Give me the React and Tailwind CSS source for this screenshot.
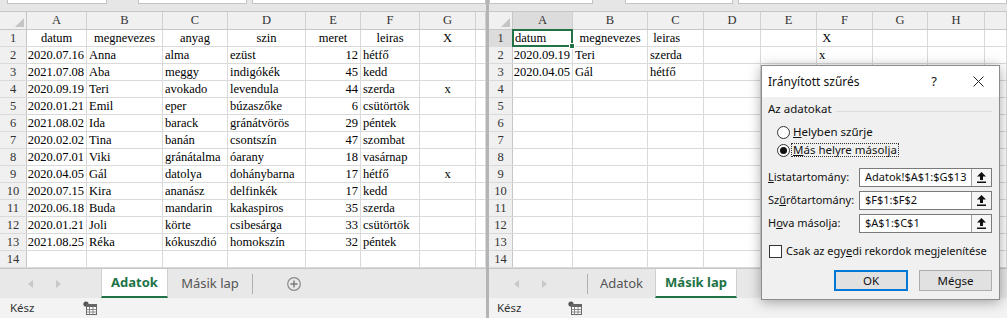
import React from "react";

// Two Excel windows side by side with the "Irányított szűrés" dialog on top
const leftCols = ["w-[60px]", "w-[76px]", "w-[65px]", "w-[78px]", "w-[55px]", "w-[59px]", "w-[56px]", "flex-1"];
const rightCols = ["w-[60px]", "w-[75px]", "w-[56px]", "w-[57px]", "w-[56px]", "w-[56px]", "w-[55px]", "w-[57px]", "flex-1"];
const leftLetters = ["A", "B", "C", "D", "E", "F", "G", ""];
const rightLetters = ["A", "B", "C", "D", "E", "F", "G", "H", ""];

const align = { l: "justify-start", r: "justify-end", c: "justify-center" };

const raw = [
  ["2020.07.16", "Anna", "alma", "ezüst", "12", "hétfő", ""],
  ["2021.07.08", "Aba", "meggy", "indigókék", "45", "kedd", ""],
  ["2020.09.19", "Teri", "avokado", "levendula", "44", "szerda", "x"],
  ["2020.01.21", "Emil", "eper", "búzaszőke", "6", "csütörtök", ""],
  ["2021.08.02", "Ida", "barack", "gránátvörös", "29", "péntek", ""],
  ["2020.02.02", "Tina", "banán", "csontszín", "47", "szombat", ""],
  ["2020.07.01", "Viki", "gránátalma", "óarany", "18", "vasárnap", ""],
  ["2020.04.05", "Gál", "datolya", "dohánybarna", "17", "hétfő", "x"],
  ["2020.07.15", "Kira", "ananász", "delfinkék", "17", "kedd", ""],
  ["2020.06.18", "Buda", "mandarin", "kakaspiros", "35", "szerda", ""],
  ["2020.01.21", "Joli", "körte", "csibesárga", "33", "csütörtök", ""],
  ["2021.08.25", "Réka", "kókuszdió", "homokszín", "32", "péntek", ""],
];
const dataAlign = ["r", "l", "l", "l", "r", "l", "c", "l"];

const leftRows = [
  ["datum", "megnevezes", "anyag", "szin", "meret", "leiras", "X", ""].map((t) => [t, "c"]),
  ...raw.map((r) => [...r, ""].map((t, i) => [t, dataAlign[i]])),
  Array(8).fill(["", "l"]),
];

const rightRows = [
  [["datum", "l"], ["megnevezes", "c"], ["\u00a0leiras", "l"], ["", "l"], ["", "l"], ["\u00a0X", "l"], ["", "l"], ["", "l"], ["", "l"]],
  [["2020.09.19", "r"], ["Teri", "l"], ["szerda", "l"], ["", "l"], ["", "l"], ["x", "l"], ["", "l"], ["", "l"], ["", "l"]],
  [["2020.04.05", "r"], ["Gál", "l"], ["hétfő", "l"], ["", "l"], ["", "l"], ["", "l"], ["", "l"], ["", "l"], ["", "l"]],
  ...Array.from({ length: 11 }, () => Array(9).fill(["", "l"])),
];

function NavArrows({ first }) {
  return (
    <div className="flex items-center">
      <svg width="5" height="8" viewBox="0 0 5 8" className={first}>
        <path d="M5 0 L0 4 L5 8 Z" fill="#c8c8c8" />
      </svg>
      <svg width="5" height="8" viewBox="0 0 5 8" className="ml-[23px]">
        <path d="M0 0 L5 4 L0 8 Z" fill="#c8c8c8" />
      </svg>
    </div>
  );
}

function MacroIcon() {
  return (
    <svg width="14" height="14" viewBox="0 0 14 14">
      <circle cx="3" cy="3" r="2.6" fill="#555" />
      <rect x="3.5" y="3.5" width="10" height="10" fill="#fff" stroke="#666" />
      <rect x="3.5" y="3.5" width="10" height="2.5" fill="#666" />
      <path d="M6.5 6 V13.5 M10 6 V13.5 M3.5 8.5 H13.5 M3.5 11 H13.5" stroke="#888" strokeWidth="1" />
    </svg>
  );
}

function Sheet({ cols, letters, rows, rowHeaderW, boxes, selected }) {
  return (
    <div className="flex flex-col h-full font-['Liberation_Serif',serif] text-[12.5px] text-black">
      {/* formula bar remnant */}
      <div className="h-[12px] bg-[#e6e6e6] flex items-start">
        {boxes.map((b, i) => (
          <div key={i} className={`${b} h-[4px] bg-white border border-t-0 border-[#c3c3c3]`} />
        ))}
      </div>
      {/* column headers */}
      <div className="h-[17px] flex bg-[#f0f0f0] border-y border-[#c6c6c6] box-content -mt-px">
        <div className={`${rowHeaderW} h-full border-r border-[#c6c6c6] flex items-end justify-end p-[2px]`}>
          <svg width="9" height="9" viewBox="0 0 9 9">
            <path d="M9 0 L9 9 L0 9 Z" fill="#c4c4c4" />
          </svg>
        </div>
        {letters.map((l, i) => (
          <div
            key={i}
            className={`${cols[i]} h-full border-r border-[#d0d0d0] flex items-center justify-center text-[#333] ${
              selected && i === 0 ? "bg-[#dcdcdc]" : ""
            }`}
          >
            {l}
          </div>
        ))}
      </div>
      {/* rows */}
      <div className="flex-1 flex flex-col">
        {rows.map((r, ri) => (
          <div key={ri} className="h-[17px] flex border-b border-[#dadada]">
            <div
              className={`${rowHeaderW} h-full border-r border-[#c6c6c6] flex items-center justify-center text-[#333] ${
                selected && ri === 0 ? "bg-[#dcdcdc]" : "bg-[#f0f0f0]"
              }`}
            >
              {ri + 1}
            </div>
            {r.map(([t, a], ci) => (
              <div
                key={ci}
                className={`${cols[ci]} h-full border-r border-[#dadada] flex items-center px-[2px] whitespace-nowrap relative ${align[a]}`}
              >
                {t}
                {selected && ri === 0 && ci === 0 && (
                  <div className="absolute -left-[1px] -top-[1px] -right-[1px] -bottom-[1px] border-2 border-[#217346] z-10">
                    <div className="absolute -right-[4px] -bottom-[4px] w-[6px] h-[6px] bg-[#217346] border border-white" />
                  </div>
                )}
              </div>
            ))}
          </div>
        ))}
      </div>
    </div>
  );
}

function Tab({ label, active, width }) {
  return (
    <div
      className={`${width} h-full flex items-center justify-center text-[13px] ${
        active
          ? "bg-white font-bold text-[#217346] border-b-2 border-[#217346] border-x border-x-[#d0d0d0]"
          : "text-[#555]"
      }`}
    >
      {label}
    </div>
  );
}

function UpButton() {
  return (
    <div className="w-[20px] h-full border-l border-[#a0a0a0] bg-[#f6f6f6] flex items-center justify-center">
      <svg width="9" height="11" viewBox="0 0 9 11">
        <path d="M4.5 0 L9 4.5 H6 V8 H3 V4.5 H0 Z" fill="#111" />
        <rect x="0" y="9.5" width="9" height="1.5" fill="#111" />
      </svg>
    </div>
  );
}

function RangeRow({ label, value }) {
  return (
    <div className="h-[19px] flex items-center">
      <div className="w-[91px]">{label}</div>
      <div className="w-[133px] h-full flex border border-[#7a7a7a] bg-white">
        <div className="flex-1 pl-[5px] flex items-center text-[11px]">{value}</div>
        <UpButton />
      </div>
    </div>
  );
}

function Dialog() {
  return (
    <div className="absolute left-[761px] top-[65px] w-[239px] h-[235px] bg-[#f0f0f0] border border-[#8c8c8c] shadow-[0_2px_12px_rgba(0,0,0,0.35)] font-['Noto_Sans',sans-serif] text-[11px] text-[#111] flex flex-col">
      <div className="h-[31px] bg-white flex items-center pl-[6px] pr-[15px]">
        <span className="text-[12px]">Irányított szűrés</span>
        <span className="ml-auto text-[13px] mr-[36px]">?</span>
        <svg width="11" height="11" viewBox="0 0 11 11">
          <path d="M0.5 0.5 L10.5 10.5 M10.5 0.5 L0.5 10.5" stroke="#222" strokeWidth="1" />
        </svg>
      </div>
      <div className="flex-1 flex flex-col px-[6px]">
        <div className="mt-[4px] h-[16px] flex items-center">
          <span className="text-[11.5px]">Az adatokat</span>
          <div className="flex-1 ml-[4px] mr-[1px] h-px bg-[#dcdcdc] mt-[4px]" />
        </div>
        <div className="mt-[6px] h-[18px] flex items-center pl-[9px]">
          <div className="w-[13px] h-[13px] rounded-full border border-[#333] bg-white" />
          <span className="ml-[3px] text-[11.5px]">
            <u>H</u>elyben szűrje
          </span>
        </div>
        <div className="h-[18px] flex items-center pl-[9px]">
          <div className="w-[13px] h-[13px] rounded-full border border-[#333] bg-white flex items-center justify-center">
            <div className="w-[7px] h-[7px] rounded-full bg-[#111]" />
          </div>
          <span className="ml-[1px] px-[1px] border border-dotted border-[#333] leading-[12px] text-[11.5px]">
            <u>M</u>ás helyre másolja
          </span>
        </div>
        <div className="mt-[9px] flex flex-col gap-[4px]">
          <RangeRow label={<><u>L</u>istatartomány:</>} value="Adatok!$A$1:$G$13" />
          <RangeRow label={<>Sz<u>ű</u>rőtartomány:</>} value="$F$1:$F$2" />
          <RangeRow label={<>H<u>o</u>va másolja:</>} value="$A$1:$C$1" />
        </div>
        <div className="mt-[9px] h-[18px] flex items-center pl-[1px]">
          <div className="w-[13px] h-[13px] border border-[#333] bg-white" />
          <span className="ml-[4px] whitespace-nowrap">
            Csak az egy<u>e</u>di rekordok megjelenítése
          </span>
        </div>
        <div className="mt-[10px] flex justify-end gap-[11px] pr-[1px] text-[11.5px]">
          <div className="w-[74px] h-[21px] bg-[#e1e1e1] border-2 border-[#0078d7] flex items-center justify-center">
            OK
          </div>
          <div className="w-[73px] h-[21px] bg-[#e1e1e1] border border-[#adadad] flex items-center justify-center">
            Mégse
          </div>
        </div>
      </div>
    </div>
  );
}

export default function App() {
  return (
    <div className="relative w-[1007px] h-[318px] overflow-hidden bg-white flex">
      {/* Left window */}
      <div className="w-[486px] h-full flex flex-col">
        <div className="h-[268px]">
          <Sheet
            cols={leftCols}
            letters={leftLetters}
            rows={leftRows}
            rowHeaderW="w-[27px]"
            boxes={["ml-[7px] w-[100px]", "ml-[31px] w-[109px]", "ml-[5px] flex-1"]}
          />
        </div>
        <div className="h-[30px] bg-[#e8e8e8] border-t border-[#c6c6c6] flex items-stretch font-['Noto_Sans',sans-serif]">
          <div className="w-[101px] flex items-center">
            <NavArrows first="ml-[28px]" />
          </div>
          <Tab label="Adatok" active width="w-[67px]" />
          <Tab label="Másik lap" width="w-[84px]" />
          <div className="w-px h-[20px] bg-[#b0b0b0] self-center" />
          <div className="ml-[34px] flex items-center">
            <svg width="14" height="14" viewBox="0 0 14 14">
              <circle cx="7" cy="7" r="6.3" fill="none" stroke="#8a8a8a" strokeWidth="1.2" />
              <path d="M7 3.5 V10.5 M3.5 7 H10.5" stroke="#7a7a7a" strokeWidth="1.4" />
            </svg>
          </div>
        </div>
        <div className="h-[20px] bg-[#f3f3f3] flex items-center font-['Noto_Sans',sans-serif] text-[11.5px] text-[#333]">
          <span className="ml-[10px] w-[73px]">Kész</span>
          <MacroIcon />
        </div>
      </div>

      {/* window divider */}
      <div className="w-[3px] h-full bg-[#b4b4b4]" />

      {/* Right window */}
      <div className="flex-1 h-full flex flex-col">
        <div className="h-[268px]">
          <Sheet
            cols={rightCols}
            letters={rightLetters}
            rows={rightRows}
            rowHeaderW="w-[24px]"
            boxes={["ml-0 w-[104px]", "ml-[32px] w-[108px]", "ml-[5px] flex-1"]}
            selected
          />
        </div>
        <div className="h-[30px] bg-[#e8e8e8] border-t border-[#c6c6c6] flex items-stretch font-['Noto_Sans',sans-serif]">
          <div className="w-[98px] flex items-center">
            <NavArrows first="ml-[25px]" />
          </div>
          <div className="w-px h-[20px] bg-[#b0b0b0] self-center" />
          <Tab label="Adatok" width="w-[67px]" />
          <Tab label="Másik lap" active width="w-[82px]" />
        </div>
        <div className="h-[20px] bg-[#f3f3f3] flex items-center font-['Noto_Sans',sans-serif] text-[11.5px] text-[#333]">
          <span className="ml-[8px] w-[71px]">Kész</span>
          <MacroIcon />
        </div>
      </div>

      <Dialog />
    </div>
  );
}
